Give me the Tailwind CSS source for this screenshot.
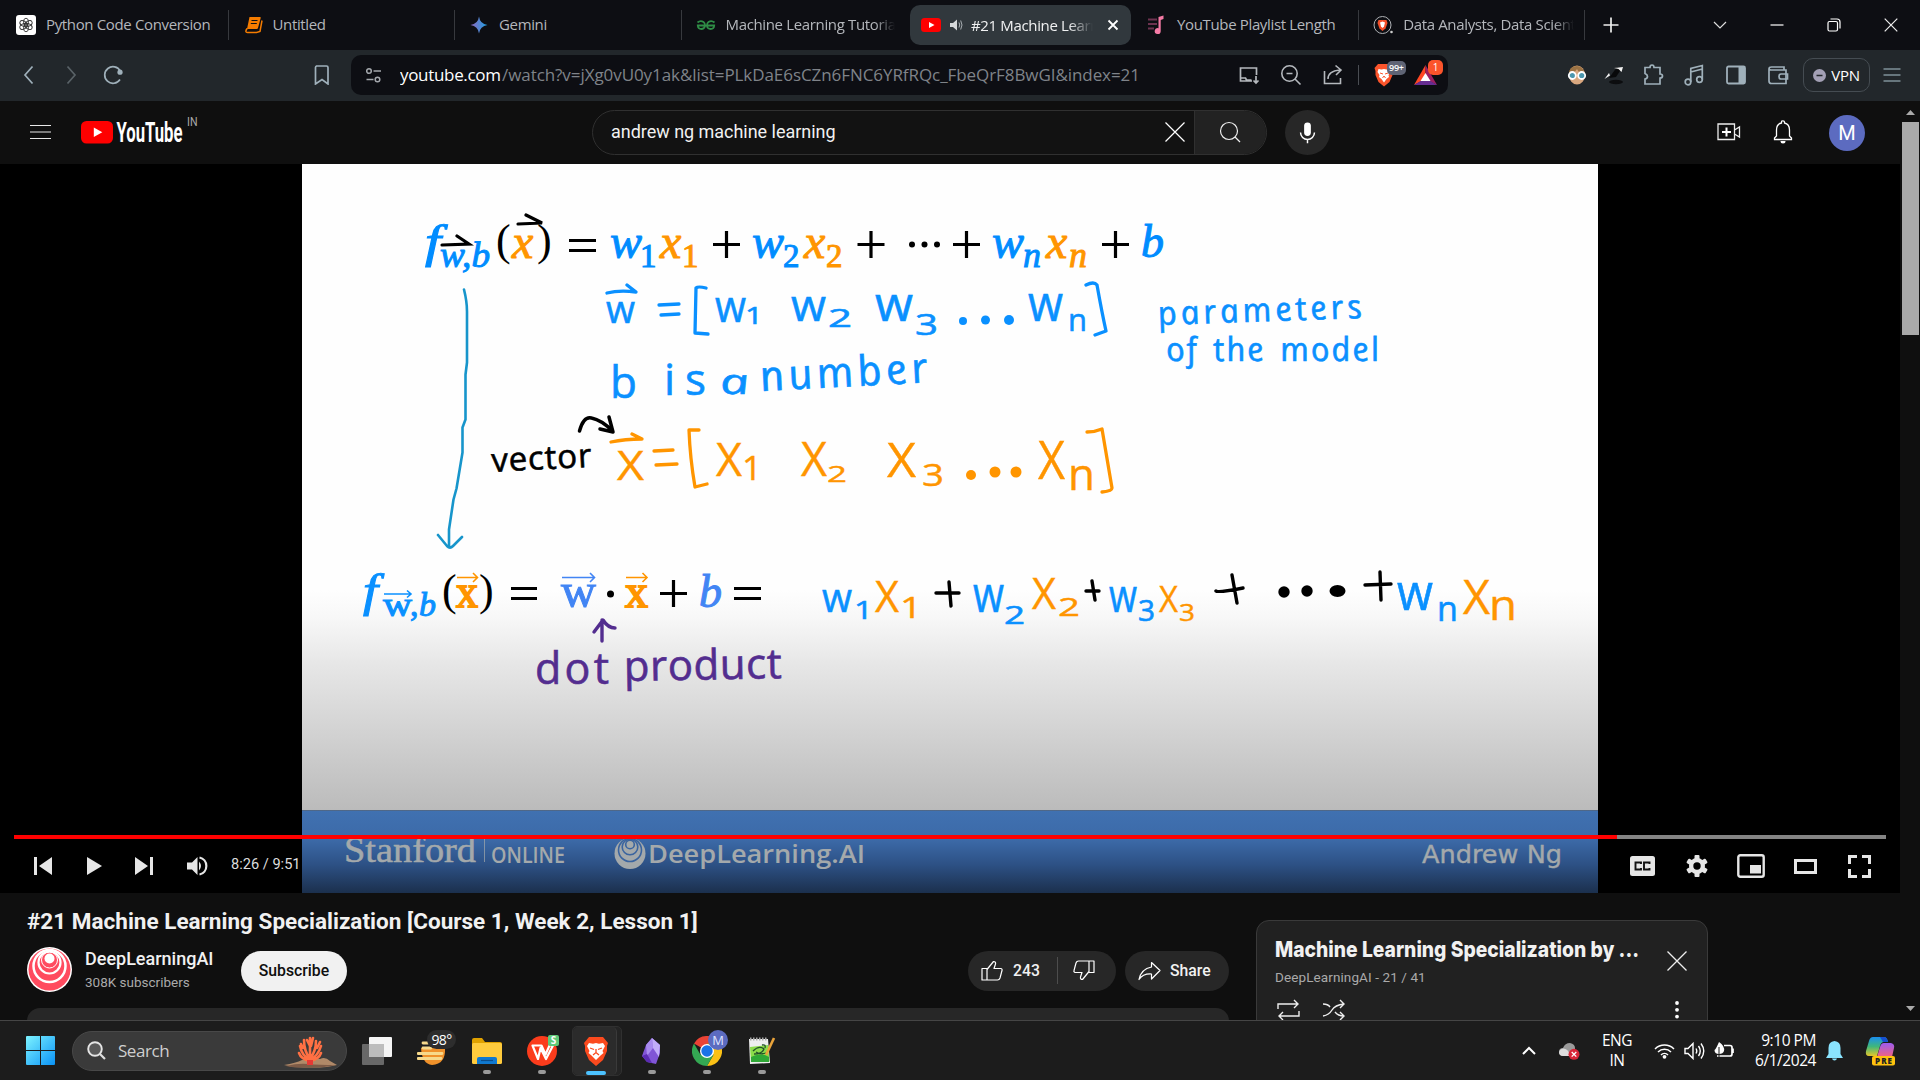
<!DOCTYPE html>
<html lang="en">
<head>
<meta charset="utf-8">
<title>#21 Machine Learning Specialization [Course 1, Week 2, Lesson 1] - YouTube</title>
<script src="https://cdn.jsdelivr.net/npm/@tailwindcss/browser@4"></script>
</head>
<body class="w-[1920px] h-[1080px] overflow-hidden bg-[#0f0f0f] font-[Roboto,'Liberation_Sans',sans-serif] text-[#f1f1f1]">
<div class="flex flex-col w-[1920px] h-[1080px]">

<!-- Tab strip -->
<div class="flex h-[50px] bg-[#0d0e13] pl-[2px] pb-px items-center font-['Open_Sans','Noto_Sans',sans-serif] text-[15px] tracking-[-0.35px] text-[#b4b7bc] whitespace-nowrap">
  <div class="flex items-center w-[226.5px] h-[30px] px-[14px] gap-[10px] border-r border-[#37393e]">
    <svg class="w-5 h-5 shrink-0" viewBox="0 0 20 20"><rect width="20" height="20" rx="3" fill="#fff"/><g fill="none" stroke="#333" stroke-width=".9"><ellipse cx="10" cy="7.200" rx="2.500" ry="4"/><ellipse cx="10" cy="7.200" rx="2.500" ry="4" transform="rotate(60 10 10)"/><ellipse cx="10" cy="7.200" rx="2.500" ry="4" transform="rotate(120 10 10)"/><ellipse cx="10" cy="7.200" rx="2.500" ry="4" transform="rotate(180 10 10)"/><ellipse cx="10" cy="7.200" rx="2.500" ry="4" transform="rotate(240 10 10)"/><ellipse cx="10" cy="7.200" rx="2.500" ry="4" transform="rotate(300 10 10)"/></g></svg>
    <span>Python Code Conversion</span>
  </div>
  <div class="flex items-center w-[226.5px] h-[30px] px-[14px] gap-[10px] border-r border-[#37393e]">
    <svg class="w-5 h-5 shrink-0" viewBox="0 0 20 20"><path d="M6.500 2H17q1 0 .7 1l-2.700 10q-.3 1-1.300 1H4z" fill="#f57c00"/><path d="M4 13.500q-2.500 4 .5 4h9l3.500-1 2-11" fill="none" stroke="#f57c00" stroke-width="1.500"/><path d="M8.500 5.500h6M7.800 8.500h6" stroke="#111" stroke-width="1.200"/></svg>
    <span>Untitled</span>
  </div>
  <div class="flex items-center w-[226.5px] h-[30px] px-[14px] gap-[10px] border-r border-[#37393e]">
    <svg class="w-5 h-5 shrink-0" viewBox="0 0 20 20"><defs><linearGradient id="gem" x1="0" x2="1"><stop offset="0" stop-color="#9168c0"/><stop offset=".5" stop-color="#5684d1"/><stop offset="1" stop-color="#1ba1e3"/></linearGradient></defs><path d="M10 1.500q1 7.500 8.500 8.500q-7.500 1-8.500 8.500q-1-7.500-8.500-8.500q7.500-1 8.500-8.500z" fill="url(#gem)"/></svg>
    <span>Gemini</span>
  </div>
  <div class="flex items-center w-[225.5px] h-[30px] pl-[14px] pr-[12px] gap-[10px]">
    <svg class="w-5 h-5 shrink-0" viewBox="0 0 20 20"><g fill="none" stroke="#2f8d46" stroke-width="1.800"><path d="M1.500 7.500q3-2.500 6-.5 2 1.500 1.500 4-.7 3-3.700 3Q2 14 1.800 10.500H18.200Q18 14 14.700 14t-3.700-3q-.5-2.500 1.500-4 3-2 6 .5"/></g></svg>
    <span class="overflow-hidden [mask-image:linear-gradient(to_right,black_88%,transparent)]">Machine Learning Tutorials</span>
  </div>
  <div class="flex items-center w-[221px] mx-[2.500px] h-10 rounded-[10px] pl-[11.500px] pr-[10px] bg-[#31383d] text-[#f0f1f2] relative top-[0.5px]">
    <svg class="w-5 h-5 shrink-0" viewBox="0 0 20 20"><rect y="3" width="20" height="14" rx="3.500" fill="#f00"/><path d="M8 7l5.500 3L8 13z" fill="#fff"/></svg>
    <svg class="w-[14px] h-[14px] shrink-0 ml-2 mr-[8px]" viewBox="0 0 14 14"><path d="M1 5h3l4-3.500v11L4 9H1z" fill="#d5d8da"/><path d="M10 4.500q1.500 2.500 0 5M11.700 2.500q2.600 4.500 0 9" fill="none" stroke="#aab0b4" stroke-width="1"/></svg>
    <span class="w-[122px] overflow-hidden [mask-image:linear-gradient(to_right,black_80%,transparent)]">#21 Machine Learning Spec</span>
    <svg class="w-[14px] h-[14px] shrink-0 ml-[13px]" viewBox="0 0 14 14"><path d="M2.500 2.500l9 9M11.500 2.500l-9 9" stroke="#fff" stroke-width="1.800"/></svg>
  </div>
  <div class="flex items-center w-[226.2px] h-[30px] px-[14px] gap-[10px] border-r border-[#37393e]">
    <svg class="w-5 h-5 shrink-0" viewBox="0 0 20 20"><path d="M1 4.500h9M1 9h9M1 13.500h6" stroke="#6e3350" stroke-width="2"/><path d="M11.500 2l5-1.500v3.500l-2.800 1V16a3 3 0 1 1-2.200-2.800z" fill="#f57ba6"/></svg>
    <span>YouTube Playlist Length</span>
  </div>
  <div class="flex items-center w-[226.2px] h-[30px] pl-[14px] pr-[10px] gap-[10px] border-r border-[#37393e]">
    <svg class="w-5 h-5 shrink-0" viewBox="0 0 20 20"><circle cx="9.500" cy="10" r="8.500" fill="none" stroke="#aeb1b5" stroke-width="1"/><path d="M5.500 5h8l1 3-2 5.500-3 2.500-3-2.500-2-5.500z" fill="#f4502a"/><path d="M7 7.500l2.500-1 2.500 1-1 4-1.500 1.500-1.500-1.500z" fill="#fff"/><circle cx="18.500" cy="17" r="1.300" fill="#ccc"/></svg>
    <span class="overflow-hidden [mask-image:linear-gradient(to_right,black_88%,transparent)]">Data Analysts, Data Scientists</span>
  </div>
  <svg class="w-4 h-4 ml-[18px]" viewBox="0 0 16 16"><path d="M8 .5v15M.5 8h15" stroke="#eee" stroke-width="1.700"/></svg>
  <div class="flex items-center ml-auto mr-[22px]">
    <svg class="w-[14px] h-[14px] mr-[43px]" viewBox="0 0 14 14"><path d="M1 4l6 6 6-6" fill="none" stroke="#ddd" stroke-width="1.200"/></svg>
    <svg class="w-[14px] h-[14px] mr-[43px]" viewBox="0 0 14 14"><path d="M.5 7h13" stroke="#fff" stroke-width="1.200"/></svg>
    <svg class="w-[14px] h-[14px] mr-[43px]" viewBox="0 0 14 14"><g fill="none" stroke="#fff" stroke-width="1.200"><rect x="1" y="3.500" width="9.500" height="9.500" rx="1.500"/><path d="M3.500 1h6.500q3 0 3 3v6.500"/></g></svg>
    <svg class="w-[14px] h-[14px]" viewBox="0 0 14 14"><path d="M.7.7l12.600 12.600M13.300.7L.7 13.300" stroke="#eee" stroke-width="1.200"/></svg>
  </div>
</div>

<!-- Navigation bar -->
<div class="flex h-[51px] shrink-0 bg-[#22272b] items-center pb-px font-['Open_Sans','Noto_Sans',sans-serif]">
  <svg class="w-5 h-5 ml-[19px]" viewBox="0 0 20 20"><path d="M13.500 1.500L6 10l7.500 8.500" fill="none" stroke="#9fb0ba" stroke-width="1.700"/></svg>
  <svg class="w-5 h-5 ml-[22px]" viewBox="0 0 20 20"><path d="M6.500 1.500L14 10l-7.500 8.500" fill="none" stroke="#596267" stroke-width="1.700"/></svg>
  <svg class="w-5 h-5 ml-[22px]" viewBox="0 0 20 20"><path d="M17 14.500A8.300 8.300 0 1 1 17.300 6" fill="none" stroke="#9fb0ba" stroke-width="1.700"/><circle cx="17" cy="7.200" r="2.600" fill="#9fb0ba"/></svg>
  <svg class="w-5 h-5 ml-[189px]" viewBox="0 0 20 20"><path d="M4 1h10.500q1.500 0 1.500 1.500V19l-6-4.500L3.500 19V2.500Q3.500 1 5 1" fill="none" stroke="#9fb0ba" stroke-width="1.700"/></svg>
  <div class="flex items-center ml-[19px] w-[1097px] h-10 rounded-[10px] bg-[#0d0e13]">
    <svg class="w-[17px] h-[17px] ml-[14px]" viewBox="0 0 17 17"><g fill="none" stroke="#a4a8ad" stroke-width="1.500"><circle cx="4" cy="4" r="2.300"/><path d="M8.500 4H16M1.500 12.500h7"/><circle cx="12.500" cy="12.500" r="2.300"/></g></svg>
    <svg class="h-10 w-[760px] ml-[18px] shrink-0" viewBox="0 0 760 40"><text y="25.500" font-size="17" textLength="101" class="fill-white">youtube.com</text><text x="102" y="25.500" font-size="17" textLength="638" class="fill-[#7f8389]">/watch?v=jXg0vU0y1ak&amp;list=PLkDaE6sCZn6FNC6YRfRQc_FbeQrF8BwGI&amp;index=21</text></svg>
    <svg class="w-[22px] h-[22px] ml-[78px]" viewBox="0 0 22 22"><path d="M18.500 11V4H2.500v13H14M2.500 14h5l1 2h5M18 12v7M15.500 16.500L18 19l2.500-2.500" fill="none" stroke="#b4b8bd" stroke-width="1.700"/></svg>
    <svg class="w-[22px] h-[22px] ml-[20px]" viewBox="0 0 22 22"><g fill="none" stroke="#b4b8bd" stroke-width="1.600"><circle cx="9.500" cy="9.500" r="7.700"/><path d="M15 15l5.500 5.500M6.500 9.500h6"/></g></svg>
    <svg class="w-[22px] h-[22px] ml-[20px]" viewBox="0 0 22 22"><path d="M2.500 7v12.500h16V14M6 15q0-8 12-9M13.500 1.500L19 6l-5 5" fill="none" stroke="#b4b8bd" stroke-width="1.600"/></svg>
    <div class="w-px h-5 bg-[#4a4d53] ml-[14px]"></div>
    <div class="relative w-[20px] h-[24px] ml-[15px]">
      <svg class="w-[20px] h-[24px]" viewBox="0 0 20 24"><path d="M4 1h12l3.500 4-1 3 0 4-3 7-5.500 4.500-5.500-4.500-3-7V8L.5 5z" fill="#fb542b"/><path d="M4.500 6l3 .5L10 6l2.500.5 3-.5 1 3-2 3 .5 2-2.500 2-2.500 3.500L7.500 16 5 14l.5-2-2-3z" fill="#fff"/><path d="M6 10l3 1M14 10l-3 1M8.500 15l1.500-2 1.500 2" stroke="#fb542b" fill="none"/></svg>
      <span class="absolute left-[13px] -top-[2px] h-[14px] px-[2px] rounded-[5px] bg-[#5f6475] text-white text-[9px] leading-[14px] font-semibold tracking-tight">99+</span>
    </div>
    <div class="relative w-[24px] h-[24px] ml-[20px]">
      <svg class="w-[23px] h-[24px]" viewBox="0 0 23 24"><path d="M11.500 2L0 22l11.500-6z" fill="#ff4724"/><path d="M11.500 2L23 22l-11.500-6z" fill="#9e1f63"/><path d="M0 22h23l-11.500-7z" fill="#662d91"/><path d="M11.500 10l5 8h-10z" fill="#fff"/></svg>
      <span class="absolute left-[14px] -top-[3px] w-[15px] h-[15px] rounded-[5px] bg-[#fb542b] text-white text-[10px] leading-[15px] text-center">1</span>
    </div>
  </div>
  <svg class="w-[20px] h-[20px] ml-[119px]" viewBox="0 0 20 20"><ellipse cx="10" cy="10" rx="8" ry="9.500" fill="#d9a77f"/><path d="M2 9Q2 1 10 1q6 0 8 8-6 0-8-5-2 4-8 5z" fill="#9c7344"/><g fill="#4b97ae" stroke="#fff" stroke-width="1.800"><circle cx="5.300" cy="10.500" r="3.500"/><circle cx="14.700" cy="10.500" r="3.500"/></g></svg>
  <svg class="w-[20px] h-[20px] ml-[17px]" viewBox="0 0 20 20"><ellipse cx="12" cy="17" rx="7" ry="2.200" fill="#0c0d0f"/><path d="M5 13L13 2l5 1-6 9z" fill="#08090a"/><path d="M10 3l9-1-1.500 5-3-3zM.5 14l4.500-6 1 2.500z" fill="#f3f3f3"/></svg>
  <svg class="w-[22px] h-[22px] ml-[18px]" viewBox="0 0 22 22"><path d="M3 3.500h5q0-2.500 2-2.500t2 2.500h6v6.500q2.500 0 2.500 2t-2.500 2v6H3v-5q2.500-.5 2.500-2.500T3 9.500z" fill="none" stroke="#9fb0ba" stroke-width="1.700"/></svg>
  <svg class="w-[22px] h-[22px] ml-[19px]" viewBox="0 0 22 22"><g fill="none" stroke="#9fb0ba" stroke-width="1.700"><circle cx="5" cy="18" r="2.800"/><circle cx="16.500" cy="15.500" r="2.800"/><path d="M7.800 18V4.500l11.500-3v14M7.800 8l11.500-3"/></g></svg>
  <svg class="w-[22px] h-[22px] ml-[20px]" viewBox="0 0 22 22"><rect x="2" y="2.500" width="18" height="17" rx="1.500" fill="none" stroke="#9fb0ba" stroke-width="1.800"/><path d="M13.500 2.500H20v17h-6.500z" fill="#9fb0ba"/></svg>
  <svg class="w-[22px] h-[22px] ml-[20px]" viewBox="0 0 22 22"><g fill="none" stroke="#9fb0ba" stroke-width="1.700"><path d="M17 6V3H4.500Q2 3 2 5v12q0 2.500 2.500 2.500H19V6H4Q2 6 2 4.500"/><path d="M20.500 10H14q-2 0-2 2.500t2 2.500h6.500z"/></g></svg>
  <div class="flex items-center justify-center gap-[5px] w-[67px] h-[34px] ml-[14px] rounded-[10px] border border-[#454c52] text-white text-[15px] tracking-[-0.3px]">
    <svg class="w-[13px] h-[13px]" viewBox="0 0 13 13"><circle cx="6.500" cy="6.500" r="6.500" fill="#a3a0b5"/><path d="M3.500 6.500h6" stroke="#22272b" stroke-width="1.500"/></svg>VPN
  </div>
  <svg class="w-[18px] h-[14px] ml-[13px]" viewBox="0 0 18 14"><path d="M.5 1h17M.5 7h17M.5 13h17" stroke="#7f9199" stroke-width="1.500"/></svg>
</div>

<!-- Page viewport -->
<div class="flex h-[919px] shrink-0 overflow-hidden">
<div class="w-[1900px] shrink-0">
  <header class="flex items-center h-[63px] pl-[30px] pb-px">
    <svg class="w-[21px] h-[16px]" viewBox="0 0 21 16"><path d="M0 1.500h21M0 8h21M0 14.500h21" stroke="#e8e8e8" stroke-width="1.200"/></svg>
    <svg class="w-[120px] h-[36px] ml-[30px]" viewBox="0 0 120 36"><rect y="7" width="32" height="22.500" rx="5.500" fill="#f00"/><path d="M12.800 13.500l8.500 4.700-8.500 4.800z" fill="#fff"/><text x="35.500" y="28" font-size="28" font-weight="700" textLength="66" lengthAdjust="spacingAndGlyphs" fill="#fff">YouTube</text><text x="106" y="12" font-size="12" fill="#aaa" textLength="10.500" lengthAdjust="spacingAndGlyphs">IN</text></svg>
    <div class="flex items-center ml-[391px] w-[675px] h-[45px] rounded-full border border-[#303030] bg-[#121212] overflow-hidden">
      <span class="ml-[18px] w-[554px] shrink-0 pb-px text-[18px] tracking-[-0.03px]">andrew ng machine learning</span>
      <svg class="w-5 h-5 shrink-0" viewBox="0 0 20 20"><path d="M.5.5l19 19M19.500.5l-19 19" stroke="#fff" stroke-width="1.200"/></svg>
      <div class="flex items-center justify-center ml-[9px] w-[72px] pr-[2px] shrink-0 h-full border-l border-[#303030] bg-[#222]">
        <svg class="w-[22px] h-[22px]" viewBox="0 0 22 22"><circle cx="10" cy="10" r="8.500" fill="none" stroke="#eee" stroke-width="1.200"/><path d="M16 16l5 5" stroke="#eee" stroke-width="1.200"/></svg>
      </div>
    </div>
    <div class="flex items-center justify-center ml-[18px] w-[45px] h-[45px] rounded-full bg-[#272727]">
      <svg class="w-[27px] h-[27px]" viewBox="0 0 24 24"><path d="M12 3a3 3 0 0 0-3 3v6a3 3 0 0 0 6 0V6a3 3 0 0 0-3-3z" fill="#fff"/><path d="M5.800 12a6.200 6.200 0 0 0 12.400 0M12 18v3.500" fill="none" stroke="#fff" stroke-width="1.300"/></svg>
    </div>
    <svg class="w-[24px] h-[20px] ml-[387px]" viewBox="0 0 24 20"><path d="M1 2h16.500v15.500H1zM17.500 8l5-3v10l-5-3" fill="none" stroke="#eee" stroke-width="1.300"/><path d="M9.500 5.500v9M5 10h9" stroke="#fff" stroke-width="2"/></svg>
    <svg class="w-[20px] h-[24px] ml-[32px]" viewBox="0 0 20 24"><path d="M1.500 19.500v-1.500l2-2v-6q0-6 5-7V2q0-1.200 1.500-1.200T11.500 2v1q5 1 5 7v6l2 2v1.500z" fill="none" stroke="#fff" stroke-width="1.300"/><path d="M7.500 21h5q0 2.500-2.500 2.500T7.500 21z" fill="#fff"/></svg>
    <div class="flex items-center justify-center ml-[36px] mt-px w-9 h-9 rounded-full bg-[#5c6bc0] text-white text-[20px] leading-none">M</div>
  </header>

  <!-- Player -->
  <div class="relative flex justify-center h-[729px] bg-black">
    <svg class="w-[1296px] h-[729px]" viewBox="302 164 1296 729" font-family="'Open Sans', 'Noto Sans', sans-serif">
      <defs>
        <linearGradient id="shade" x1="0" y1="0" x2="0" y2="1"><stop offset="0" stop-color="#fefefe"/><stop offset=".12" stop-color="#f8f8f8"/><stop offset=".33" stop-color="#e7e7e7"/><stop offset="1" stop-color="#bbb"/></linearGradient>
        <linearGradient id="band" x1="0" y1="0" x2="0" y2="1"><stop offset="0" stop-color="#4071b1"/><stop offset=".35" stop-color="#3c6aa8"/><stop offset=".65" stop-color="#2d5185"/><stop offset="1" stop-color="#1b2f4c"/></linearGradient>
      </defs>
      <rect x="302" y="164" width="1296" height="646" fill="#fefefe"/>
      <rect x="302" y="590" width="1296" height="220.500" fill="url(#shade)"/>
      <rect x="302" y="810.500" width="1296" height="83" fill="url(#band)"/>

      <!-- scalar form of the model -->
      <g transform="translate(0 1)" font-family="'Liberation Serif', serif" font-size="48" font-style="italic" stroke-width="1" fill="#008cff" stroke="#008cff">
        <text x="425" y="256" font-size="46" textLength="16" lengthAdjust="spacingAndGlyphs">f</text>
        <text x="440" y="266" font-size="36" textLength="50" lengthAdjust="spacingAndGlyphs">w,b</text>
        <text x="610" y="257" textLength="32" lengthAdjust="spacingAndGlyphs">w</text>
        <text x="640" y="266" font-size="33" font-style="normal">1</text>
        <text x="752" y="257" textLength="32" lengthAdjust="spacingAndGlyphs">w</text>
        <text x="783" y="266" font-size="33" font-style="normal">2</text>
        <text x="992" y="257" textLength="32" lengthAdjust="spacingAndGlyphs">w</text>
        <text x="1023" y="266" font-size="36">n</text>
        <text x="1141" y="256" font-size="46">b</text>
        <g fill="#ff9500" stroke="#ff9500">
          <text x="512" y="257">x</text><text x="660" y="257">x</text><text x="682" y="266" font-size="33" font-style="normal">1</text>
          <text x="804" y="257">x</text><text x="826" y="266" font-size="33" font-style="normal">2</text>
          <text x="1046" y="257">x</text><text x="1069" y="266" font-size="36">n</text>
        </g>
        <g fill="#000" stroke="none" font-style="normal"><text x="496" y="254" font-size="44">(</text><text x="537" y="254" font-size="44">)</text></g>
      </g>
      <g stroke="#000" stroke-width="3.200" fill="none">
        <path d="M569 240.500h27M569 250.500h27M713 244.500h27M726.500 231v27M857.500 244.500h27M871 231v27M953 244.500h27M966.500 231v27M1102 244.500h27M1115.500 231v27"/>
        <g stroke-linecap="round"><path d="M518 224l24-1-16-8M442 245l27-1-12-8"/></g>
      </g>
      <g fill="#000"><circle cx="912" cy="244.500" r="3"/><circle cx="924.500" cy="244.500" r="3"/><circle cx="937" cy="244.500" r="3"/></g>

      <path d="M464 289.500q3 12 3 22v51l-1.500 12v45l-3 8v25l-6 36-3 11-4.500 30v18M438 535l9 11q3 3 6 0l9-9" fill="none" stroke="#1795cb" stroke-width="2.600" stroke-linecap="round" stroke-linejoin="round"/>

      <!-- handwritten notes, blue -->
      <g fill="#0a90ff" stroke="#0a90ff" stroke-width=".6">
        <text x="606" y="323" font-size="39" textLength="29" lengthAdjust="spacingAndGlyphs">w</text>
        <text x="715" y="322" font-size="43" textLength="31" lengthAdjust="spacingAndGlyphs">w</text><text x="745" y="324" font-size="24" textLength="18" lengthAdjust="spacingAndGlyphs">1</text>
        <text x="791" y="321" font-size="44" textLength="35" lengthAdjust="spacingAndGlyphs">w</text><text x="828" y="327" font-size="25" textLength="24" lengthAdjust="spacingAndGlyphs">2</text>
        <text x="875" y="321" font-size="47" textLength="38" lengthAdjust="spacingAndGlyphs">w</text><text x="915" y="335" font-size="30" textLength="23" lengthAdjust="spacingAndGlyphs">3</text>
        <text x="1028" y="321" font-size="49" textLength="35" lengthAdjust="spacingAndGlyphs">w</text><text x="1068" y="331" font-size="31">n</text>
        <text x="610" y="398" font-size="44">b</text><text x="664" y="395" font-size="44" textLength="42" lengthAdjust="spacing">is</text>
        <text transform="translate(722 394) skewX(12)" font-size="35" font-style="italic" textLength="29" lengthAdjust="spacingAndGlyphs">a</text>
        <text transform="translate(763 391) rotate(-3) skewX(12)" font-size="42" font-style="italic" textLength="168">number</text>
        <text transform="translate(1160 325) rotate(-2) skewX(12)" font-size="33" font-style="italic" textLength="204">parameters</text>
        <text transform="translate(1168 361) skewX(12)" font-size="33" font-style="italic" textLength="213" word-spacing="4">of the model</text>
      </g>
      <g fill="none" stroke="#0a90ff" stroke-width="3.300" stroke-linecap="round" stroke-linejoin="round">
        <path d="M607 293q12-3 29-1l-9-7M659 305l20-1M661 315l18-1M706 288q-8-2-10 0l-1 45 13 1M1086 285q8-4 11 0 5 28 9 46l-11 4"/>
      </g>
      <g fill="#0a90ff"><circle cx="963" cy="321" r="4"/><circle cx="985.500" cy="320" r="4.500"/><circle cx="1009" cy="320" r="5"/></g>

      <!-- handwritten notes, orange -->
      <g fill="#ff9500" stroke="#ff9500" stroke-width=".4">
        <text x="617" y="480" font-size="40" textLength="27" lengthAdjust="spacingAndGlyphs">X</text>
        <text x="716" y="476" font-size="46" textLength="26" lengthAdjust="spacingAndGlyphs">X</text><text x="742" y="480" font-size="33" textLength="20" lengthAdjust="spacingAndGlyphs">1</text>
        <text x="801" y="476" font-size="48" textLength="26" lengthAdjust="spacingAndGlyphs">X</text><text x="827" y="482" font-size="22" textLength="20" lengthAdjust="spacingAndGlyphs">2</text>
        <text x="887" y="477" font-size="48" textLength="29" lengthAdjust="spacingAndGlyphs">X</text><text x="922" y="486" font-size="31" textLength="22" lengthAdjust="spacingAndGlyphs">3</text>
        <text x="1038" y="479" font-size="53" textLength="27" lengthAdjust="spacingAndGlyphs">X</text><text x="1068" y="490" font-size="43" textLength="27" lengthAdjust="spacingAndGlyphs">n</text>
      </g>
      <g fill="none" stroke="#ff9500" stroke-width="3.300" stroke-linecap="round" stroke-linejoin="round">
        <path d="M611 442q14-3 31-3l-10-5M654 451l19-1M656 465l21-1M699 430h-10q1 28 6 57l12-3M1087 432q8 0 15-3l10 59q0 3-10 4"/>
      </g>
      <g fill="#ff9500"><circle cx="971" cy="475" r="5"/><circle cx="995" cy="472" r="5.500"/><circle cx="1016" cy="472" r="5.500"/></g>
      <text transform="translate(492 472) rotate(-3)" font-size="33" fill="#000" stroke="#000" stroke-width=".6" textLength="100">vector</text>
      <path d="M579.500 431q4-15 12-13 10 2 21 13M609 417l4 15-13-3" fill="none" stroke="#000" stroke-width="3.500" stroke-linecap="round" stroke-linejoin="round"/>

      <!-- vector form of the model -->
      <g font-family="'Liberation Serif', serif" font-size="48" stroke-width="1" fill="#0a90ff" stroke="#0a90ff">
        <text x="363" y="606" font-size="46" font-style="italic" textLength="15" lengthAdjust="spacingAndGlyphs">f</text>
        <text x="383" y="616" font-size="34" textLength="29" lengthAdjust="spacingAndGlyphs">w</text><text x="410" y="616" font-size="34">,</text><text x="419" y="616" font-size="34" font-style="italic">b</text>
        <g fill="#4285f4" stroke="#4285f4"><text x="561" y="607" textLength="35" lengthAdjust="spacingAndGlyphs">w</text><text x="699" y="607" font-size="46" font-style="italic">b</text></g>
        <g fill="#ff9500" stroke="#ff9500" stroke-width="1.800"><text x="456" y="607" font-size="47" textLength="22" lengthAdjust="spacingAndGlyphs">x</text><text x="625" y="607" font-size="47" textLength="23" lengthAdjust="spacingAndGlyphs">x</text></g>
        <g fill="#000" stroke="none"><text x="442" y="605" font-size="44">(</text><text x="479" y="605" font-size="44">)</text></g>
      </g>
      <g fill="none" stroke-width="1.600">
        <path d="M384 594h27M407 590.500l4 3.500-4 3.500" stroke="#0a90ff"/><path d="M562 577.500h32M590 573l4.500 4.500-4.500 4.500" stroke="#4285f4"/>
        <path d="M457 577.500h21M473 573l4.500 4.500-4.500 4.500M626 577.500h21M642.500 573l4.500 4.500-4.500 4.500" stroke="#ff9500"/>
      </g>
      <path d="M511 588.500h26M511 598.500h26M660 593.500h27M673.500 580v27M734 588.500h27M734 598.500h27" fill="none" stroke="#000" stroke-width="3.200"/><circle cx="610.500" cy="594" r="3.500"/>

      <!-- expanded sum, handwritten -->
      <g fill="#0a90ff" stroke="#0a90ff" stroke-width=".6">
        <text x="822" y="612" font-size="41" textLength="30" lengthAdjust="spacingAndGlyphs">w</text><text x="854" y="619" font-size="26" textLength="19" lengthAdjust="spacingAndGlyphs">1</text>
        <text x="973" y="612" font-size="50" textLength="31" lengthAdjust="spacingAndGlyphs">w</text><text x="1004" y="624" font-size="26" textLength="21" lengthAdjust="spacingAndGlyphs">2</text>
        <text x="1109" y="612" font-size="45" textLength="28" lengthAdjust="spacingAndGlyphs">w</text><text x="1138" y="621" font-size="29" textLength="17" lengthAdjust="spacingAndGlyphs">3</text>
        <text x="1397" y="610" font-size="50" textLength="36" lengthAdjust="spacingAndGlyphs">w</text><text x="1437" y="621" font-size="34">n</text>
      </g>
      <g fill="#ff9500" stroke="#ff9500" stroke-width=".4">
        <text x="875" y="612" font-size="43" textLength="24" lengthAdjust="spacingAndGlyphs">X</text><text x="900" y="618" font-size="29" textLength="22" lengthAdjust="spacingAndGlyphs">1</text>
        <text x="1032" y="609" font-size="44" textLength="24" lengthAdjust="spacingAndGlyphs">X</text><text x="1058" y="616" font-size="25" textLength="22" lengthAdjust="spacingAndGlyphs">2</text>
        <text x="1159" y="612" font-size="37" textLength="19" lengthAdjust="spacingAndGlyphs">X</text><text x="1179" y="621" font-size="23" textLength="16" lengthAdjust="spacingAndGlyphs">3</text>
        <text x="1463" y="614" font-size="48" textLength="27" lengthAdjust="spacingAndGlyphs">X</text><text x="1489" y="620" font-size="42" textLength="28" lengthAdjust="spacingAndGlyphs">n</text>
      </g>
      <g fill="none" stroke="#000" stroke-width="3.400" stroke-linecap="round"><path d="M936 593h23M949 582l2 24M1086 591h13M1092 581l3 19M1216 591q2 2 27-3M1232 575l5 28M1365 585l26-1M1380 572l1 28"/></g>
      <circle cx="1284" cy="592" r="5.700"/><circle cx="1307" cy="591" r="5.700"/><ellipse cx="1337.500" cy="591" rx="8" ry="6"/>
      <g fill="#532d8f" stroke="#532d8f" stroke-width=".6">
        <text x="535" y="684" font-size="43" textLength="74">dot</text>
        <text transform="translate(624 681) rotate(-1)" font-size="42" textLength="158">product</text>
      </g>
      <path d="M602 641v-21M594 632l9-12q5 8 12 8" fill="none" stroke="#532d8f" stroke-width="3.400" stroke-linecap="round" stroke-linejoin="round"/>

      <!-- footer marks -->
      <g fill="#a4a9ab">
        <text x="344" y="862" font-family="'Liberation Serif', serif" font-size="35" textLength="132" lengthAdjust="spacingAndGlyphs" stroke="#a4a9ab" stroke-width=".5">Stanford</text>
        <rect x="484" y="838" width="1" height="24" fill-opacity=".7"/>
        <text x="491" y="862.500" font-size="22" font-weight="600" textLength="74" lengthAdjust="spacingAndGlyphs">ONLINE</text>
        <circle cx="630" cy="853.500" r="15.500"/>
        <g fill="none" stroke="#3a649f" stroke-width="1.600"><circle cx="630" cy="850" r="11.500"/><circle cx="630" cy="847" r="7.800"/><circle cx="630" cy="844.500" r="4.300"/></g>
        <text x="648" y="862.500" font-size="26" font-weight="600" textLength="217" lengthAdjust="spacingAndGlyphs">DeepLearning.AI</text>
        <text x="1422" y="862.500" font-size="25" font-family="'DejaVu Sans', sans-serif" textLength="140" lengthAdjust="spacingAndGlyphs" stroke="#a4a9ab" stroke-width=".4">Andrew Ng</text>
      </g>
    </svg>

    <div class="absolute left-[14px] top-[671px] w-[1872px] h-1 bg-[#848484]"><div class="h-1 w-[1603px] bg-[#f00]"></div></div>
    <div class="absolute inset-x-0 bottom-0 h-[54px] flex items-center text-[#e6e6e6]">
      <svg class="w-[18px] h-[18px] ml-[34px]" viewBox="0 0 18 18" fill="currentColor"><path d="M0 0h3v18H0zM18 0v18L5 9z"/></svg>
      <svg class="w-[15px] h-[18px] ml-[35px]" viewBox="0 0 15 18" fill="currentColor"><path d="M0 0l15 9-15 9z"/></svg>
      <svg class="w-[18px] h-[18px] ml-[33px]" viewBox="0 0 18 18" fill="currentColor"><path d="M15 0h3v18h-3zM0 0v18l13-9z"/></svg>
      <svg class="w-[21px] h-[20px] ml-[34px]" viewBox="0 0 21 20"><path d="M0 6.500h5l5.500-5.500v18L5 13.500H0z" fill="currentColor"/><path d="M12 5.500q4 4.500 0 9z" fill="currentColor"/><path d="M12.500 1.500a8.700 8.700 0 0 1 0 17" fill="none" stroke="currentColor" stroke-width="2.200"/></svg>
      <span class="ml-[23px] text-[14.600px] text-[#ddd] pb-[3px]">8:26 / 9:51</span>
      <div class="flex items-center ml-auto mr-[28px]">
        <svg class="w-[25px] h-[20px]" viewBox="0 0 25 20"><rect width="25" height="20" rx="2.500" fill="currentColor"/><path d="M11 8V6.500H5.500v7H11V12M19.500 8V6.500H14v7h5.500V12" fill="none" stroke="#111" stroke-width="1.900"/></svg>
        <svg class="w-[24px] h-[24px] ml-[30px]" viewBox="0 0 24 24"><g fill="currentColor"><circle cx="12" cy="12" r="8"/><rect x="9.500" y="1" width="5" height="22" rx="1"/><rect x="9.500" y="1" width="5" height="22" rx="1" transform="rotate(60 12 12)"/><rect x="9.500" y="1" width="5" height="22" rx="1" transform="rotate(120 12 12)"/></g><circle cx="12" cy="12" r="3.700" fill="#000"/></svg>
        <svg class="w-[28px] h-[24px] ml-[28px]" viewBox="0 0 28 24"><rect x="1.300" y="1.300" width="25.400" height="21.400" rx="2" fill="none" stroke="currentColor" stroke-width="2.400"/><rect x="13" y="11" width="11" height="8.500" fill="currentColor"/></svg>
        <svg class="w-[23px] h-[15px] ml-[29px]" viewBox="0 0 23 15"><rect x="1.500" y="1.500" width="20" height="12" fill="none" stroke="currentColor" stroke-width="3"/></svg>
        <svg class="w-[23px] h-[23px] ml-[31px] mr-[1px]" viewBox="0 0 23 23"><path d="M1.500 9V1.500H9M14 1.500h7.500V9M21.500 14v7.500H14M9 21.500H1.500V14" fill="none" stroke="currentColor" stroke-width="3"/></svg>
      </div>
    </div>
  </div>

  <!-- Below the player -->
  <div class="flex items-start h-[127px] pl-[27px]">
    <div class="w-[1202px] h-[127px]">
      <h1 class="mt-[13px] h-[31px] leading-[31px] text-[22.500px] font-bold tracking-[0.01px] whitespace-nowrap">#21 Machine Learning Specialization [Course 1, Week 2, Lesson 1]</h1>
      <div class="flex items-center h-[45px] mt-[10px]">
        <svg class="w-[45px] h-[45px]" viewBox="0 0 45 45"><circle cx="22.500" cy="22.500" r="22.500" fill="#fff"/><circle cx="22.500" cy="22.500" r="21" fill="#ff4b5f"/><g fill="none" stroke="#fff"><circle cx="22.500" cy="19" r="16" stroke-width="2.500"/><circle cx="22.500" cy="15.500" r="11" stroke-width="2.200"/></g><circle cx="22.500" cy="11.500" r="5" fill="#fff"/><circle cx="22.500" cy="13" r="8" fill="none" stroke="#fff" stroke-width="1"/></svg>
        <div class="ml-[13px] w-[156px] whitespace-nowrap">
          <div class="text-[18px] leading-[24px] font-medium">DeepLearningAI</div>
          <div class="text-[13.500px] leading-[22px]">
            <span class="text-[#aaa]">308K subscribers</span>
          </div>
        </div>
        <div class="flex items-center justify-center w-[106px] h-10 mt-[2px] rounded-full bg-[#f1f1f1] text-[#0f0f0f] text-[15.750px] font-medium">Subscribe</div>
        <div class="flex items-center ml-auto mt-[2px] w-[148px] h-10 rounded-full bg-[#272727] text-[15.750px] font-medium">
          <svg class="w-[22px] h-[21px] ml-[13px]" viewBox="0 0 22 21"><path d="M1 8.500h5V20H1zM6 9.500L12.500 1.500q2.500 0 2 2.500L13 8.500h7q1.500.5 1 2L19 18q-.7 2-2.500 2H6" fill="none" stroke="#fff" stroke-width="1.200" stroke-linejoin="round"/></svg>
          <span class="ml-[10px]">243</span>
          <div class="w-px h-[27px] ml-auto bg-[#4d4d4d]"></div>
          <svg class="w-[22px] h-[21px] ml-[15px] mr-[21px]" viewBox="0 0 22 21"><path d="M21 1h-5v11.500h5zM16 11.500L9.500 19.500q-2.500 0-2-2.500L9 12.500H2q-1.500-.5-1-2L3 3q.7-2 2.500-2H16" fill="none" stroke="#fff" stroke-width="1.200" stroke-linejoin="round"/></svg>
        </div>
        <div class="flex items-center ml-[9px] mt-[2px] w-[104px] h-10 rounded-full bg-[#272727] text-[15.750px] font-medium">
          <svg class="w-[23px] h-[20px] ml-[13px]" viewBox="0 0 23 20"><path d="M13.500 1.500L22 9.500l-8.500 8.500v-5Q5 12.500 1 18.500 3 8 13.500 6z" fill="none" stroke="#fff" stroke-width="1.200" stroke-linejoin="round"/></svg>
          <span class="ml-[9px]">Share</span>
        </div>
      </div>
      <div class="h-7 mt-[16px] rounded-t-[13px] bg-[#272727]"></div>
    </div>
    <div class="relative ml-[27px] mt-[27px] w-[452px] h-[120px] rounded-t-[13px] border border-[#3a3a3a] bg-[#212121] pl-[18px] pt-[13px]">
      <svg class="w-[380px] h-[30px] block" viewBox="0 0 380 30" font-family="Inter, Roboto, sans-serif"><text y="23" font-size="22" font-weight="800" textLength="364" lengthAdjust="spacingAndGlyphs" fill="#f1f1f1">Machine Learning Specialization by ...</text></svg>
      <div class="text-[13.500px] leading-[18px] mt-[4px] tracking-[0.1px] text-[#aaa]">DeepLearningAI - 21 / 41</div>
      <div class="flex mt-[13px] ml-[2px] gap-[22px]">
        <svg class="w-[23px] h-[22px]" viewBox="0 0 23 22"><path d="M1 10V5h20M17 1l4 4-4 4M22 12v5H2M6 13l-4 4 4 4" fill="none" stroke="#eee" stroke-width="1.400"/></svg>
        <svg class="w-[24px] h-[22px]" viewBox="0 0 24 22"><path d="M1 17q6-1 9-6t12-6M1 5q5 0 7 3M13 13q3 4 9 4M18 1l4 4-4 4M18 13l4 4-4 4" fill="none" stroke="#eee" stroke-width="1.400"/></svg>
      </div>
      <svg class="absolute left-[410px] top-[30px] w-5 h-5" viewBox="0 0 20 20"><path d="M.5.5l19 19M19.500.5l-19 19" stroke="#eee" stroke-width="1.300"/></svg>
      <svg class="absolute left-[417px] top-[79px] w-[6px] h-[20px]" viewBox="0 0 6 20" fill="#fff"><circle cx="3" cy="3" r="1.900"/><circle cx="3" cy="9.800" r="1.900"/><circle cx="3" cy="16.600" r="1.900"/></svg>
    </div>
  </div>
</div>
<!-- Scroll bar -->
<div class="flex flex-col items-center w-[20px] bg-[#0f0f0f] pt-[9px] pb-[9px]">
  <svg class="w-[9px] h-[5px]" viewBox="0 0 9 5"><path d="M0 5l4.500-5L9 5z" fill="#aaa"/></svg>
  <div class="w-[17px] h-[213px] mt-[7px] bg-[#a9a9a9]"></div>
  <svg class="w-[9px] h-[5px] mt-auto" viewBox="0 0 9 5"><path d="M0 0l4.500 5L9 0z" fill="#aaa"/></svg>
</div>
</div>

<!-- Taskbar -->
<div class="flex items-center h-[60px] shrink-0 border-t border-[#454545] bg-[#1c1c1c] font-['Open_Sans','Noto_Sans',sans-serif] text-white">
  <svg class="w-[29px] h-[29px] ml-[26px]" viewBox="0 0 29 29"><defs><linearGradient id="win" x1="0" y1="0" x2="1" y2="1" gradientUnits="objectBoundingBox"><stop offset="0" stop-color="#7df3ff"/><stop offset="1" stop-color="#0a92f5"/></linearGradient></defs><path d="M0 1q0-1 1-1h13v14H0zM15 0h13q1 0 1 1v13H15zM0 15h14v14H1q-1 0-1-1zM15 15h14v13q0 1-1 1H15z" fill="url(#win)"/></svg>
  <div class="flex items-center ml-[17px] w-[275px] h-10 rounded-full bg-[#3a3a3a] border border-[#484848]">
    <svg class="w-[19px] h-[19px] ml-[14px]" viewBox="0 0 19 19"><circle cx="8" cy="8" r="6.800" fill="#5a5a5a" stroke="#e5e5e5" stroke-width="1.900"/><path d="M13 13l5 5" stroke="#ddd" stroke-width="2.200"/></svg>
    <span class="ml-[12px] text-[17px] tracking-[-0.45px] text-[#cfcfcf]">Search</span>
    <svg class="w-[54px] h-[34px] ml-auto mr-[8px]" viewBox="0 0 54 34"><path d="M0 31q12-2 18-5 8-3 18-1 5-3 10 2l7 4q-10 3-30 2.500Q10 34 0 31z" fill="#b08968"/><path d="M2 32q12-3 22-2t28 1q-10 2.500-28 2.500Q10 34 2 32z" fill="#7d5b47"/><g fill="none" stroke="#ff7043" stroke-width="2.600" stroke-linecap="round"><path d="M26 28V4M26 26Q18 22 16 12M26 26q8-4 11-14M26 25Q20 17 20 6M26 25q6-8 6-18M26 27Q17 25 15 19M26 27q9-2 11-8M19 14l-2-4M33 14l3-6M26 12l-3-6M27 12l2-8"/></g><path d="M23 26h6v5h-6z" fill="#e53935"/></svg>
  </div>
  <svg class="w-[30px] h-[28px] ml-[15px]" viewBox="0 0 30 28"><rect y="7" width="22" height="21" rx="1" fill="#686868"/><rect x="7" width="23" height="20" rx="1" fill="#f5f5f5"/><path d="M7 7h15v13H7z" fill="#bdbdbd"/></svg>
  <div class="relative w-[30px] h-[28px] ml-[25px]">
    <svg class="w-[30px] h-[28px]" viewBox="0 0 30 28"><path d="M4 11h24q1 16-13 17Q5 27 4 11z" fill="#f0922b"/><path d="M6 6h5M6 11h8M1 16.500h19M21 16.500h4M1 21.500h23" stroke="#f7d98b" stroke-width="2.800" stroke-linecap="round"/></svg>
    <span class="absolute left-[10px] -top-[7px] h-[19px] w-[29px] rounded-full bg-[#2d2d2d] text-center text-[14px] leading-[19px] tracking-[-0.6px]">98°</span>
  </div>
  <div class="flex flex-col items-center w-[30px] ml-[25px] pt-[9px]"><svg class="w-[30px] h-[28px]" viewBox="0 0 30 28"><path d="M0 3q0-2 2-2h8l3 4h15q2 0 2 2v6H0z" fill="#e0a100"/><rect y="6" width="30" height="21" rx="1.500" fill="#ffcb3d"/><path d="M5 27v-5q0-2 2-2h16q2 0 2 2v5z" fill="#1079d0"/><path d="M9 23.500h12" stroke="#0a4d8c" stroke-width="1.200"/></svg><i class="block w-2 h-1 mt-[5px] rounded-full bg-[#9a9a9a]"></i></div>
  <div class="relative flex flex-col items-center w-[30px] ml-[25px] pt-[8px]"><svg class="w-[30px] h-[30px]" viewBox="0 0 30 30"><circle cx="15" cy="15" r="15" fill="#fb3c1c"/><path d="M5.500 9.500h9l4 9 4-9h3.500L19 23l-5.500-11L11 23z" fill="none" stroke="#fff" stroke-width="2.200" stroke-linejoin="round"/></svg><span class="absolute left-[21px] top-[7px] w-[11px] h-[11px] rounded-[2px] bg-[#5fc878] text-[10px] leading-[11px] font-bold text-center">S</span><i class="block w-2 h-1 mt-[4px] rounded-full bg-[#9a9a9a]"></i></div>
  <div class="flex ml-[15px] w-[50px] h-[50px] rounded-[5px] bg-[#242424] border border-[#303030]">
    <div class="flex flex-col items-center w-[44px] pl-[3px] h-[48px] pt-[9px] rounded-[5px] border-r border-[#3a3a3a] bg-[#2b2b2b]"><svg class="w-[26px] h-[30px]" viewBox="0 0 26 30"><path d="M6 1h14l5 6-1 3v5l-4 9-7 6-7-6-4-9v-5L1 7z" fill="#fb4a1e"/><path d="M6 7l4 .8L13 7l3 .8 4-.8 2 3-2.500 5 1 2-3 2.500L13 24l-4.500-4.500-3-2.500 1-2L4 10z" fill="#fff"/><path d="M7 12l4 1.500M19 12l-4 1.500M10 19l3-2.500 3 2.500M13 13v4" stroke="#fb4a1e" fill="none" stroke-width="1.300"/></svg><i class="block w-5 h-1 mt-[5px] rounded-full bg-[#4cc2ff]"></i></div>
  </div>
  <div class="flex flex-col items-center w-[30px] ml-[15px] pt-[9px]"><svg class="w-[22px] h-[28px]" viewBox="0 0 22 28"><path d="M11 1l8 7v8l-4 11-9-2-5-6 4-11z" fill="#8055d6"/><path d="M11 1l-6 7 1 11 6-8z" fill="#a98bf0"/><path d="M11 1l1 10 6 9 1-12z" fill="#c2adfa"/><path d="M1 19l5-2 5 9-5-1z" fill="#5b2bb5"/></svg><i class="block w-2 h-1 mt-[5px] rounded-full bg-[#9a9a9a]"></i></div>
  <div class="relative flex flex-col items-center w-[30px] ml-[25px] pt-[8px]"><svg class="w-[30px] h-[30px]" viewBox="0 0 30 30"><path d="M15 15L2 7.500A15 15 0 0 1 28 7.500H15z" fill="#ea4335"/><path d="M15 15l6.500 3.700L15 30A15 15 0 0 0 28 7.500H15z" fill="#fbc116"/><path d="M15 15l6.500 3.700L15 30A15 15 0 0 1 2 7.500L8.500 18.700z" fill="#34a853"/><circle cx="15" cy="15" r="7" fill="#fff"/><circle cx="15" cy="15" r="5.700" fill="#1a73e8"/></svg><span class="absolute left-[16px] top-[2px] w-5 h-5 rounded-full bg-[#5c6bc0] text-[13px] leading-[20px] text-center text-[#dfe3ff]">M</span><i class="block w-2 h-1 mt-[4px] rounded-full bg-[#9a9a9a]"></i></div>
  <div class="flex flex-col items-center w-[30px] ml-[25px] pt-[8px]"><svg class="w-[30px] h-[29px]" viewBox="0 0 30 29"><path d="M2 3h19l2 24-20 1z" fill="#eee"/><path d="M3 11l18-2 1.500 16L4 26z" fill="#8bdc4a"/><path d="M4 21q9-5 18 0v5H4z" fill="#2fa836"/><path d="M6 15q6-6 11-2-2 5-10 5M9 16q4 3 10 1M15 9q4-1 3 3" fill="none" stroke="#23502a" stroke-width="1.300"/><path d="M3 3h18" stroke="#aaa" stroke-width="3" stroke-dasharray="1.500 1.500"/><path d="M27 2L19 19" stroke="#e9a33a" stroke-width="2.600"/></svg><i class="block w-2 h-1 mt-[5px] rounded-full bg-[#9a9a9a]"></i></div>

  <div class="flex items-center ml-auto mr-[24px]">
    <svg class="w-[14px] h-[9px]" viewBox="0 0 14 9"><path d="M1 8l6-6 6 6" fill="none" stroke="#fff" stroke-width="2"/></svg>
    <svg class="w-[21px] h-[18px] ml-[23px]" viewBox="0 0 21 18"><path d="M5 14q-5 0-5-4t4-4q2-5 7-5 5 1 5 5v8z" fill="#9b9b9b"/><path d="M4 14q-4 0-4-4 1-3.500 4.500-3.500Q10 7 11 14z" fill="#dcdcdc"/><circle cx="15" cy="12.300" r="5.500" fill="#d92638"/><path d="M12.700 10l4.600 4.600M17.300 10l-4.600 4.600" stroke="#fff" stroke-width="1.300"/></svg>
    <div class="ml-[21px] w-[32px] pb-px text-center text-[15.500px] leading-[20px] tracking-[-0.5px]">ENG<br>IN</div>
    <svg class="w-[21px] h-[17px] ml-[21px]" viewBox="0 0 21 17"><g fill="none" stroke="#fff" stroke-width="1.500"><path d="M1 7a13.500 13.500 0 0 1 19 0M4 10a9.300 9.300 0 0 1 13 0M7 13a5 5 0 0 1 7 0"/></g><circle cx="10.500" cy="14.800" r="1.900" fill="#fff"/></svg>
    <svg class="w-[21px] h-[18px] ml-[9px]" viewBox="0 0 21 18"><g fill="none" stroke="#fff" stroke-width="1.400"><path d="M1 6.500h3l5-5v15l-5-5H1zM12 6.500q1.500 2.500 0 5M14.500 4q3.500 5 0 10M17 1.500q5.500 7.500 0 15"/></g></svg>
    <svg class="w-[21px] h-[19px] ml-[9px]" viewBox="0 0 21 19"><path d="M10 4.500h6q2 0 2 2V13q0 2-2 2H3M19 7.500v4.500" fill="none" stroke="#fff" stroke-width="1.700"/><path d="M5 1q6 4 5 9-1 3-5 3-4.500 0-4.500-4Q2 8 5 1z" fill="#fff"/><path d="M5 6v10M12 7.500h3v5h-5" stroke="#1c1c1c" fill="none"/></svg>
    <div class="ml-[18px] w-[63px] pb-[2px] text-right text-[15.500px] leading-[20px] tracking-[-0.45px] whitespace-nowrap">9:10 PM<br>6/1/2024</div>
    <svg class="w-[17px] h-[20px] ml-[10px]" viewBox="0 0 17 20"><path d="M8.500 0q6 .5 6 7v6l2.500 4H0l2.500-4V7q0-6.500 6-7zM6 17.500h5q-.5 2-2.500 2T6 17.500z" fill="#8ae4ff"/></svg>
    <svg class="w-[31px] h-[30px] ml-[22px]" viewBox="0 0 31 30"><defs><linearGradient id="cpa" x1="0" y1="0" x2="0" y2="1"><stop offset="0" stop-color="#1a8ff0"/><stop offset=".5" stop-color="#3fb77b"/><stop offset="1" stop-color="#e5c62a"/></linearGradient><linearGradient id="cpb" x1="0" y1="0" x2="0" y2="1"><stop offset="0" stop-color="#9b5cf0"/><stop offset="1" stop-color="#f2637e"/></linearGradient></defs><path d="M8 1h11q3 0 4 5h-4q-3 0-4 4l-3 10H4q-4 0-3-5L4 5q1-4 4-4z" fill="url(#cpa)"/><path d="M15 1h4q3 0 4 5h-5z" fill="#1650d0"/><path d="M19 7h7q4 1 3 5l-2 9H12l3-10q1-4 4-4z" fill="url(#cpb)"/><rect x="7" y="20" width="23" height="9.500" rx="2" fill="#ffc20e"/><text x="10" y="27.600" font-size="8" font-weight="800" textLength="17" fill="#222">PRE</text></svg>
  </div>
</div>
</div>
</body>
</html>
